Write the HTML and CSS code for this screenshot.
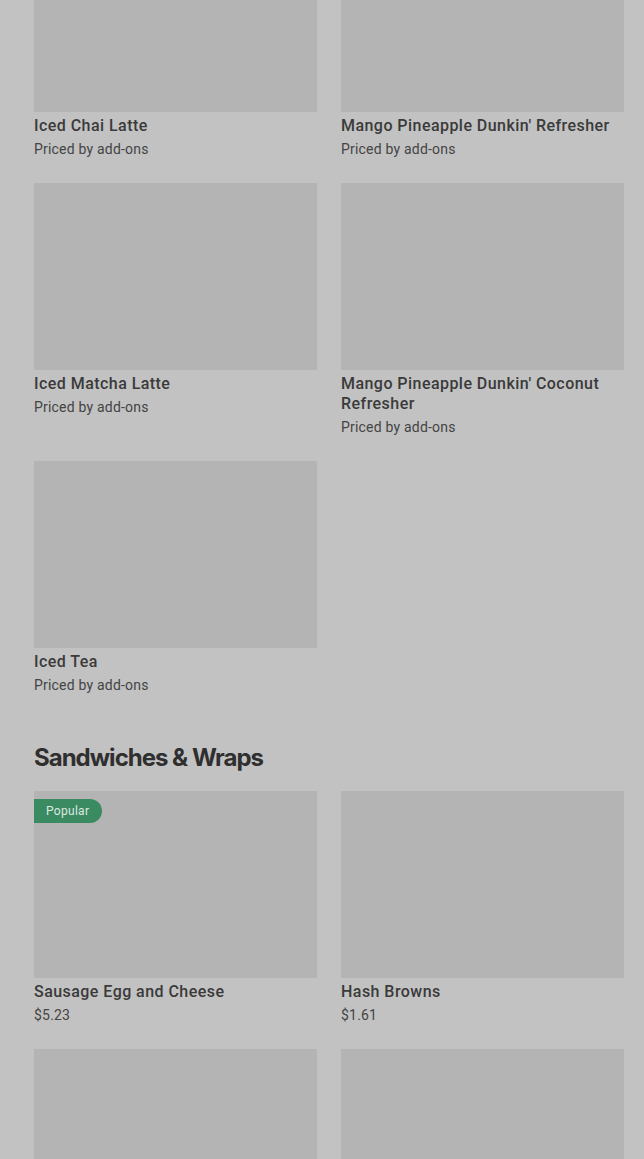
FILE: index.html
```html
<!DOCTYPE html>
<html lang="en">
<head>
    <meta charset="UTF-8">
    <meta name="viewport" content="width=device-width, initial-scale=1.0">
    <title>Menu</title>
    <link rel="stylesheet" href="styles.css">
</head>
<body>
    <!-- Menu list (scrolled, page is behind a modal backdrop) -->
    <main class="menu">
        <section class="menu-section">
            <div class="item-grid first-grid">
                <div class="item">
                    <div class="item-img"></div>
                    <h3 class="item-name">Iced Chai Latte</h3>
                    <p class="item-price">Priced by add-ons</p>
                </div>
                <div class="item">
                    <div class="item-img"></div>
                    <h3 class="item-name">Mango Pineapple Dunkin' Refresher</h3>
                    <p class="item-price">Priced by add-ons</p>
                </div>
                <div class="item">
                    <div class="item-img"></div>
                    <h3 class="item-name">Iced Matcha Latte</h3>
                    <p class="item-price">Priced by add-ons</p>
                </div>
                <div class="item">
                    <div class="item-img"></div>
                    <h3 class="item-name">Mango Pineapple Dunkin' Coconut Refresher</h3>
                    <p class="item-price">Priced by add-ons</p>
                </div>
                <div class="item">
                    <div class="item-img"></div>
                    <h3 class="item-name">Iced Tea</h3>
                    <p class="item-price">Priced by add-ons</p>
                </div>
            </div>
        </section>

        <section class="menu-section">
            <h2 class="section-title">Sandwiches &amp; Wraps</h2>
            <div class="item-grid">
                <div class="item">
                    <div class="item-img">
                        <span class="badge">Popular</span>
                    </div>
                    <h3 class="item-name">Sausage Egg and Cheese</h3>
                    <p class="item-price">$5.23</p>
                </div>
                <div class="item">
                    <div class="item-img"></div>
                    <h3 class="item-name">Hash Browns</h3>
                    <p class="item-price">$1.61</p>
                </div>
                <!-- next row, only the images are in view -->
                <div class="item">
                    <div class="item-img"></div>
                </div>
                <div class="item">
                    <div class="item-img"></div>
                </div>
            </div>
        </section>
    </main>
</body>
</html>
```

FILE: styles.css
```css
/* Basic reset */
* {
    margin: 0;
    padding: 0;
    box-sizing: border-box;
}
/* Body: page dimmed by the modal backdrop */
body {
    background-color: #c2c2c2;
    font-family: Roboto, "Liberation Sans", sans-serif;
    color: #333333;
    overflow: hidden;
}
.menu {
    padding: 0 20px 0 34px;
}
/* Sections */
.menu-section + .menu-section {
    margin-top: 47px;
}
.section-title {
    font-family: Inter, Roboto, sans-serif;
    font-size: 24px;
    line-height: 32px;
    font-weight: 700;
    letter-spacing: -1px;
    color: #2f2f2f;
    margin-bottom: 17px;
}
/* Item grid */
.item-grid {
    display: grid;
    grid-template-columns: 283px 283px;
    column-gap: 24px;
    row-gap: 24px;
}
.first-grid {
    margin-top: -75px;
}
/* Item card */
.item-img {
    position: relative;
    height: 187px;
    background-color: #b4b4b4;
}
.item-name {
    margin-top: 4px;
    font-size: 16px;
    line-height: 20px;
    font-weight: 500;
    letter-spacing: 0.45px;
    color: #3a3a3a;
}
.item-price {
    margin-top: 3px;
    font-size: 14px;
    line-height: 20px;
    letter-spacing: 0.2px;
    color: #444444;
}
/* Popular badge */
.badge {
    position: absolute;
    top: 8px;
    left: 0;
    height: 24px;
    padding: 0 13px 0 12px;
    display: flex;
    align-items: center;
    background-color: #3a8b61;
    color: #dde8e1;
    font-size: 12px;
    letter-spacing: 0.3px;
    border-radius: 0 12px 12px 0;
}
```
